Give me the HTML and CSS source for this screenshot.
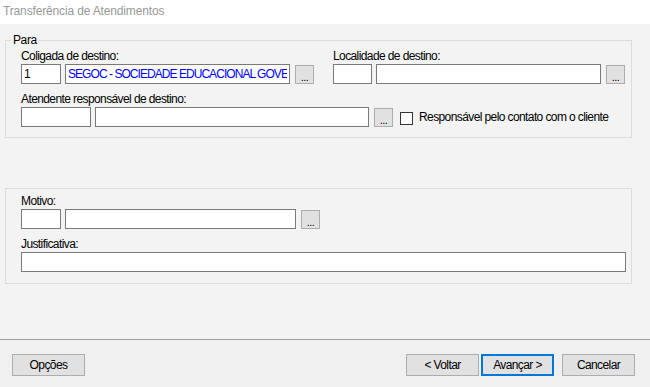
FILE: index.html
```html
<!DOCTYPE html>
<html lang="pt-BR">
<head>
    <meta charset="UTF-8">
    <meta name="viewport" content="width=device-width, initial-scale=1.0">
    <title>Transferência de Atendimentos</title>
    <link rel="stylesheet" href="styles.css">
</head>
<body>
    <div class="titlebar">Transferência de Atendimentos</div>

    <div class="main">
        <fieldset class="group group-para">
            <legend>Para</legend>
            <div class="group-body">
                <div class="row">
                    <div class="field field-coligada">
                        <label>Coligada de destino:</label>
                        <div class="inputs">
                            <input type="text" class="code" value="1">
                            <input type="text" class="name blue" value="SEGOC - SOCIEDADE EDUCACIONAL GOVERNAMENTAL">
                            <button class="lookup">...</button>
                        </div>
                    </div>
                    <div class="field field-localidade">
                        <label>Localidade de destino:</label>
                        <div class="inputs">
                            <input type="text" class="code narrow">
                            <input type="text" class="name">
                            <button class="lookup">...</button>
                        </div>
                    </div>
                </div>
                <div class="row">
                    <div class="field">
                        <label>Atendente responsável de destino:</label>
                        <div class="inputs">
                            <input type="text" class="code wide">
                            <input type="text" class="name long">
                            <button class="lookup">...</button>
                            <span class="check"></span>
                            <span class="check-text">Responsável pelo contato com o cliente</span>
                        </div>
                    </div>
                </div>
            </div>
        </fieldset>

        <fieldset class="group group-motivo">
            <div class="group-body">
                <div class="field">
                    <label>Motivo:</label>
                    <div class="inputs">
                        <input type="text" class="code">
                        <input type="text" class="name motivo">
                        <button class="lookup">...</button>
                    </div>
                </div>
                <div class="field field-gap">
                    <label>Justificativa:</label>
                    <div class="inputs">
                        <input type="text" class="full">
                    </div>
                </div>
            </div>
        </fieldset>
    </div>

    <div class="footer">
        <button class="btn">Opções</button>
        <div class="spacer"></div>
        <button class="btn">&lt; Voltar</button>
        <button class="btn btn-focus">Avançar &gt;</button>
        <button class="btn btn-cancel">Cancelar</button>
    </div>
</body>
</html>
```

FILE: styles.css
```css
body {
    margin: 0;
    padding: 0;
    width: 650px;
    height: 387px;
    overflow: hidden;
    font-family: "Liberation Sans", Arial, sans-serif;
    font-size: 12px;
    color: #000;
    background-color: #f0f0f0;
}

.titlebar {
    height: 24px;
    line-height: 22px;
    padding-left: 3px;
    background-color: #ffffff;
    color: #999999;
    letter-spacing: -0.15px;
}

.main {
    height: 315px;
    padding-top: 9px;
    box-sizing: border-box;
    background-color: #f3f3f3;
}

.group {
    margin: 0 0 0 5px;
    padding: 0;
    width: 627px;
    box-sizing: border-box;
    border: 1px solid #dcdcdc;
    min-width: 0;
}

.group legend {
    margin-left: 5px;
    padding: 0 2px;
    line-height: 15px;
    letter-spacing: -0.4px;
}

.group-para .group-body {
    padding: 1px 0 10px 15px;
}

.group-motivo {
    margin-top: 50px;
}

.group-motivo .group-body {
    padding: 5px 0 11px 15px;
}

.row {
    display: flex;
    gap: 19px;
}

.row + .row {
    margin-top: 8px;
}

.field-gap {
    margin-top: 8px;
}

.field label {
    display: block;
    height: 15px;
    line-height: 15px;
    letter-spacing: -0.6px;
    white-space: nowrap;
}

.inputs {
    display: flex;
    align-items: flex-start;
}

.inputs input {
    height: 20px;
    box-sizing: border-box;
    border: 1px solid #7a7a7a;
    background-color: #ffffff;
    padding: 0 2px;
    margin: 0;
    font-family: "Liberation Sans", Arial, sans-serif;
    font-size: 12px;
    letter-spacing: -0.6px;
    color: #000;
    outline: none;
}

.inputs .code {
    width: 40px;
}

.inputs .code.narrow {
    width: 39px;
}

.inputs .code.wide {
    width: 70px;
}

.inputs .name {
    width: 225px;
    margin-left: 4px;
}

.inputs .name.long {
    width: 274px;
}

.inputs .name.motivo {
    width: 231px;
}

.inputs .full {
    width: 605px;
}

.inputs .blue {
    color: #0000ff;
    letter-spacing: -0.95px;
}

.lookup {
    width: 19px;
    height: 19px;
    margin: 1px 0 0 5px;
    padding: 5px 0 0 0;
    box-sizing: border-box;
    border: 1px solid #adadad;
    background-color: #e1e1e1;
    font-family: "Liberation Sans", Arial, sans-serif;
    font-size: 11px;
    line-height: 11px;
    letter-spacing: -0.5px;
    color: #000;
}

.check {
    width: 13px;
    height: 13px;
    box-sizing: border-box;
    margin: 5px 0 0 7px;
    border: 1px solid #333333;
    background-color: #ffffff;
}

.check-text {
    margin-left: 6px;
    line-height: 20px;
    letter-spacing: -0.6px;
    white-space: nowrap;
}

.footer {
    height: 48px;
    box-sizing: border-box;
    border-top: 1px solid #a0a0a0;
    background-color: #f0f0f0;
    display: flex;
    align-items: flex-start;
    padding: 14px 15px 0 12px;
}

.spacer {
    flex-grow: 1;
}

.btn {
    width: 73px;
    height: 22px;
    box-sizing: border-box;
    border: 1px solid #adadad;
    background-color: #e1e1e1;
    padding: 0;
    font-family: "Liberation Sans", Arial, sans-serif;
    font-size: 12px;
    letter-spacing: -0.6px;
    color: #000;
}

.btn-focus {
    margin-left: 2px;
    border: 2px solid #0078d7;
}

.btn-cancel {
    margin-left: 8px;
}
```
